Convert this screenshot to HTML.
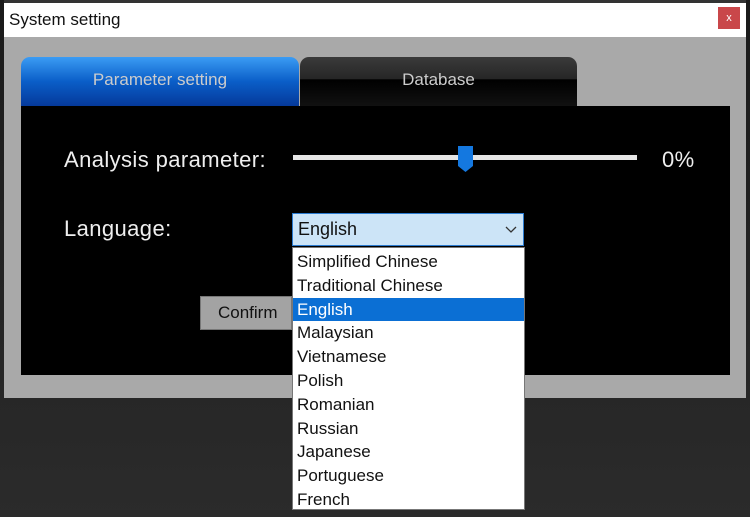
<!DOCTYPE html>
<html><head><style>
body{margin:0;width:750px;height:517px;overflow:hidden;background:linear-gradient(#1a1a1a,#2b2b2b);font-family:"Liberation Sans",sans-serif;position:relative}
.a{position:absolute}
.win{left:4px;top:0;width:742px;height:395px;background:#a9a9a9;border-top:3px solid #333}
.title{left:4px;top:3px;width:742px;height:34px;background:#fff;font-size:17px;color:#111}
.close{left:718px;top:7px;width:22px;height:22px;background:#c9474a;color:#fff;font-size:11px;text-align:center;line-height:22px}
.tab{top:57px;height:49px;border-radius:9px 9px 0 0;color:#ccc;font-size:17px;text-align:center;line-height:46px}
.t1{left:21px;width:278px;background:linear-gradient(#3b9cf4,#0a5ec8 50%,#05399a)}
.t2{left:300px;width:277px;background:linear-gradient(#3a3a3a,#262626 45%,#000 46%,#111)}
.panel{left:21px;top:106px;width:709px;height:269px;background:#000}
.lbl{color:#eee;font-size:22px;letter-spacing:0.4px}
.list div{height:23.8px;line-height:23.8px;padding-left:4px;font-size:17px;color:#111}
</style></head><body>
<div class="a win"></div>
<div class="a title"><span class="a" style="left:5px;top:7px">System setting</span></div>
<div class="a close">x</div>
<div class="a tab t1">Parameter setting</div>
<div class="a tab t2">Database</div>
<div class="a panel"></div>
<div class="a lbl" style="left:64px;top:147px">Analysis parameter:</div>
<div class="a lbl" style="left:64px;top:216px">Language:</div>
<div class="a lbl" style="left:662px;top:147px">0%</div>
<div class="a" style="left:293px;top:155px;width:344px;height:5px;background:#e6e6e6"></div>
<svg class="a" style="left:458px;top:146px" width="16" height="27"><path d="M0 0H15V20L7.5 26L0 20Z" fill="#1478e0"/></svg>
<div class="a" style="left:200px;top:296px;width:92px;height:34px;background:#a3a3a3;border:1px solid #777;box-sizing:border-box;font-size:17px;line-height:32px;padding-left:17px;color:#111">Confirm</div>
<div class="a" style="left:292px;top:213px;width:232px;height:33px;background:#cce4f7;border:1px solid #2b7bd0;box-sizing:border-box;font-size:18px;line-height:31px;padding-left:5px;color:#111">English<svg class="a" style="left:212px;top:12px" width="12" height="8"><path d="M1 1L6 6L11 1" stroke="#333" fill="none" stroke-width="1.3"/></svg></div>
<div class="a list" style="left:292px;top:247px;width:233px;height:263px;background:#fff;border:1px solid #777;box-sizing:border-box;padding-top:2px">
<div>Simplified Chinese</div><div>Traditional Chinese</div><div style="background:#0b6fd4;color:#fff">English</div><div>Malaysian</div><div>Vietnamese</div><div>Polish</div><div>Romanian</div><div>Russian</div><div>Japanese</div><div>Portuguese</div><div>French</div>
</div>
</body></html>
